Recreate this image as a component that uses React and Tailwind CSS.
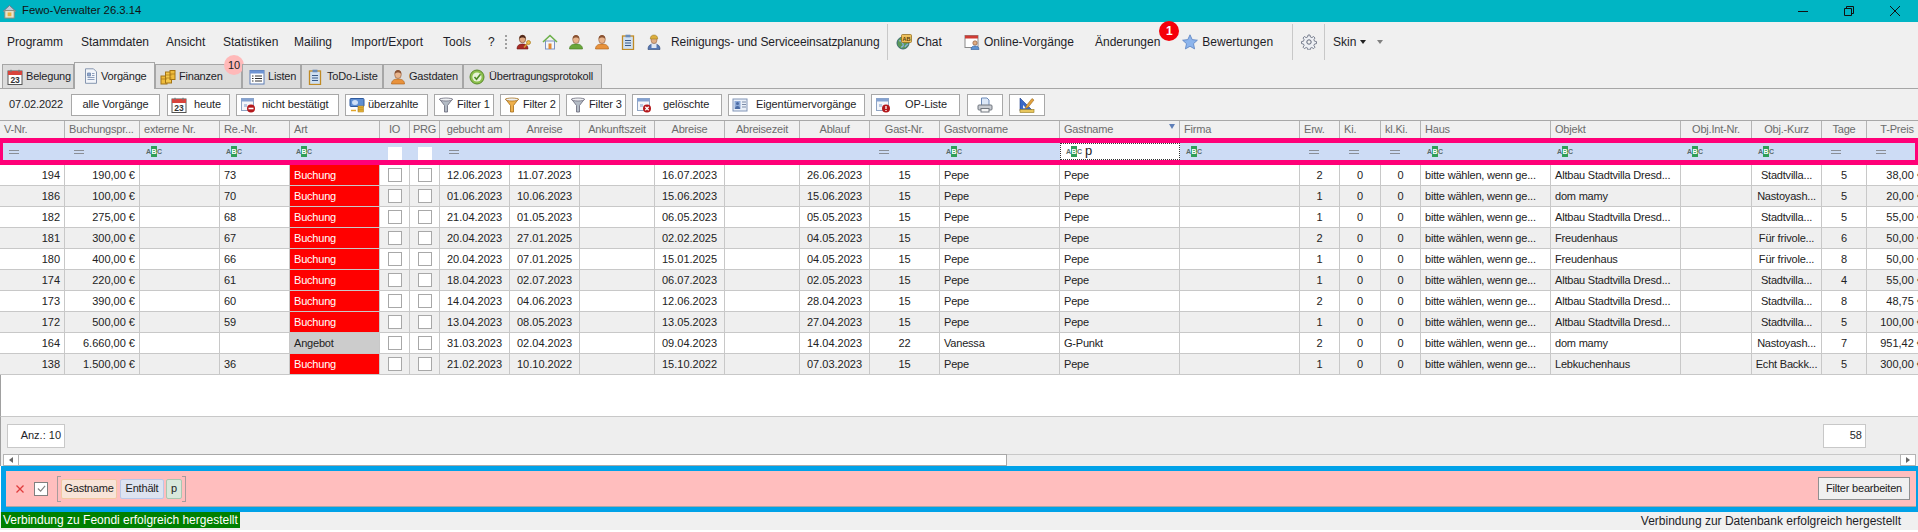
import React from 'react';

const FONT = { arial: "font-['Liberation_Sans',Arial,sans-serif]" };
const COLS = 'grid grid-cols-[65px_75px_80px_70px_90px_30px_30px_70px_70px_75px_70px_75px_70px_70px_120px_120px_120px_40px_41px_40px_130px_130px_71px_70px_45px_61px]';

// ── small colored icons, drawn roughly like the app's 16px toolbar set ──
const Svg = ({ children, className = 'w-4 h-4 shrink-0' }) => (
  <svg viewBox="0 0 16 16" className={className}>{children}</svg>
);

function Person({ shirt = '#6aa63a', dark = '#3f7a1e' }) {
  return (
    <Svg>
      <path d="M1.5 15c0-3.5 2.5-5 6.500-5s6.500 1.500 6.500 5z" fill={shirt} stroke={dark} strokeWidth=".6" />
      <ellipse cx="8" cy="5.500" rx="3.300" ry="4" fill="#e8b48c" stroke="#8c5a3c" strokeWidth=".6" />
      <path d="M4.700 5c0-3 1.500-4 3.300-4s3.300 1 3.300 4c-1-2-5.600-2-6.600 0z" fill="#8a5232" />
    </Svg>
  );
}

const KeyPerson = () => (
  <Svg>
    <path d="M1 15c0-3.500 1.800-5 5.500-5s5.500 1.500 5.500 5z" fill="#a82a24" stroke="#6e1612" strokeWidth=".6" />
    <ellipse cx="6.500" cy="5" rx="3.200" ry="3.800" fill="#e0a880" stroke="#6a3c24" strokeWidth=".6" />
    <path d="M3.300 5c0-3 1.300-4 3.200-4s3.200 1 3.200 4c-1-2-5.400-2-6.400 0z" fill="#50281a" />
    <circle cx="12.500" cy="8.500" r="2" fill="#eebc4a" stroke="#a87818" strokeWidth=".7" />
    <path d="M11 10l-3 3.500" stroke="#d49c2c" strokeWidth="1.500" />
  </Svg>
);

const House = () => (
  <Svg>
    <rect x="3.500" y="7" width="9" height="8" fill="#f4f6fb" stroke="#7d92c4" />
    <path d="M1 8l7-6.500L15 8" fill="none" stroke="#6cb04a" strokeWidth="1.600" />
    <rect x="6.500" y="9.500" width="3" height="5.500" fill="#e08a34" />
  </Svg>
);

const Clipboard = () => (
  <Svg>
    <rect x="2.500" y="2" width="11" height="13.500" fill="#cfe0f2" stroke="#c08a24" strokeWidth="1.300" />
    <rect x="5.500" y=".7" width="5" height="2.600" fill="#6a8cb8" />
    <path d="M5 6.500h6M5 9h6M5 11.500h6" stroke="#3a5a88" />
  </Svg>
);

const Worker = () => (
  <Svg>
    <path d="M2 15.500c0-4 2-5.500 6-5.500s6 1.500 6 5.500z" fill="#5678b4" stroke="#2f4674" strokeWidth=".6" />
    <rect x="5.500" y="10" width="5" height="4" fill="#dfe7f4" />
    <ellipse cx="8" cy="6" rx="3" ry="3.500" fill="#dfae84" stroke="#8c5a3c" strokeWidth=".5" />
    <path d="M4.300 5c0-3 1.700-4 3.700-4s3.700 1 3.700 4z" fill="#dcae3c" stroke="#8e6e1c" strokeWidth=".5" />
  </Svg>
);

const Calendar23 = () => (
  <Svg>
    <rect x="1" y="2" width="14" height="13.500" fill="#fff" stroke="#555" />
    <rect x="1" y="2" width="14" height="4" fill="#d8443c" />
    <path d="M4 .8v2.500M12 .8v2.500" stroke="#777" strokeWidth="1.200" />
    <text x="8" y="14.200" textAnchor="middle" fontSize="8.500" fontWeight="700" fill="#333" fontFamily="Liberation Sans">23</text>
  </Svg>
);

const Doc = () => (
  <Svg>
    <path d="M2.500 .8h8l3 3v11.500h-11z" fill="#f2f5fa" stroke="#8696b0" />
    <path d="M4.500 5h3v3h-3zM4.500 9.500h7M4.500 11.500h7M9 5.500h2.500M9 7.500h2.500" fill="#8ea6cc" stroke="#7288ac" strokeWidth=".8" />
  </Svg>
);

const Coins = () => (
  <Svg>
    <rect x="1" y="7" width="6" height="8" fill="#eebb3c" stroke="#a47414" />
    <rect x="5.500" y="3" width="6" height="11" fill="#f4c84c" stroke="#a47414" />
    <rect x="10" y="1.500" width="5" height="9" fill="#eebb3c" stroke="#a47414" />
    <path d="M5.500 6h6M5.500 9h6M1 10h6M10 5h5" stroke="#a47414" strokeWidth=".7" />
  </Svg>
);

const ListWin = () => (
  <Svg>
    <rect x="1" y="1.500" width="14" height="13.500" fill="#fff" stroke="#5c7cb4" />
    <rect x="1" y="1.500" width="14" height="3" fill="#6e94d4" />
    <path d="M3 7h1.500M6 7h7M3 9.500h1.500M6 9.500h7M3 12h1.500M6 12h7" stroke="#333" />
  </Svg>
);

const CheckCircle = () => (
  <Svg>
    <circle cx="8" cy="8" r="7" fill="#8cc04c" stroke="#5a8a2c" />
    <circle cx="8" cy="8" r="4.600" fill="#e8f2d8" />
    <path d="M5.500 8l2 2.200 4-5" fill="none" stroke="#4c8a24" strokeWidth="1.600" />
  </Svg>
);

const Funnel = ({ fill = '#b4bcc6', edge = '#667' }) => (
  <Svg>
    <path d="M1.500 2h13L9.500 8.500v6.500h-3V8.500z" fill={fill} stroke={edge} strokeWidth=".8" />
    <ellipse cx="8" cy="2.500" rx="6.500" ry="1.500" fill="#eef0f2" stroke={edge} strokeWidth=".7" />
  </Svg>
);

// calendar page with a small round red mark (nicht bestätigt, gelöschte, OP-Liste)
const CalMark = ({ mark }) => (
  <Svg>
    <rect x="1.500" y="1.500" width="12" height="12" fill="#f4f6fa" stroke="#8fa4c4" />
    <rect x="1.500" y="1.500" width="12" height="3" fill="#84a2d2" />
    <path d="M4 7h3v3H4z" fill="#b9c8e0" />
    <circle cx="11" cy="11.500" r="4" fill="#b4181c" />
    {mark === 'minus' && <path d="M8.500 11.500h5" stroke="#fff" strokeWidth="1.600" />}
    {mark === 'x' && <path d="M9.300 9.800l3.400 3.400M12.700 9.800l-3.400 3.400" stroke="#fff" strokeWidth="1.300" />}
    {mark === 'bang' && <path d="M11 9v3M11 13v1" stroke="#fff" strokeWidth="1.300" />}
  </Svg>
);

const MoneyCard = () => (
  <Svg>
    <rect x="1" y="1.500" width="14" height="8" rx="1" fill="#5e8ed2" stroke="#2f5a9e" />
    <ellipse cx="6" cy="5.500" rx="3" ry="2.500" fill="#cfe0f6" />
    <rect x="9" y="9" width="5.500" height="2" fill="#eebb3c" stroke="#a47414" strokeWidth=".5" />
    <rect x="9" y="11" width="5.500" height="2" fill="#eebb3c" stroke="#a47414" strokeWidth=".5" />
    <rect x="9" y="13" width="5.500" height="2" fill="#eebb3c" stroke="#a47414" strokeWidth=".5" />
    <path d="M2 13.500h5" stroke="#e0a428" strokeWidth="1.500" />
  </Svg>
);

const OwnerCard = () => (
  <Svg>
    <rect x="1" y="2" width="14" height="12" fill="#eaf0f8" stroke="#8296b8" />
    <rect x="2.500" y="4" width="6" height="8" fill="#8eaad8" />
    <circle cx="5.500" cy="6.500" r="1.500" fill="#4c6ca4" />
    <path d="M3 12c0-2 1-3 2.500-3s2.500 1 2.500 3z" fill="#4c6ca4" />
    <path d="M10 5h4M10 7.500h4M10 10h4" stroke="#7c8ca8" />
  </Svg>
);

const Printer = () => (
  <Svg>
    <path d="M4.500 1h5.500l2 2v6h-7.500z" fill="#dce8f8" stroke="#6c8ab8" />
    <rect x="1" y="8" width="14" height="5" rx="1" fill="#c8ccd2" stroke="#70767e" />
    <rect x="4" y="11.500" width="8" height="3.500" fill="#f6f6f6" stroke="#70767e" />
  </Svg>
);

const RulerPen = () => (
  <Svg>
    <path d="M1 1v13h13z" fill="#3a68c8" stroke="#1e3e88" strokeWidth=".6" />
    <path d="M4 8v3.200h3.200z" fill="#f0f0f0" />
    <rect x="1" y="12.500" width="14" height="3" fill="#e8c65c" stroke="#94781c" strokeWidth=".6" />
    <path d="M7 9l6-7.500 2 1.500-6 7.500-2.500 1z" fill="#e2a23c" stroke="#8c5c14" strokeWidth=".5" />
  </Svg>
);

const ChatGlobe = () => (
  <Svg>
    <circle cx="7" cy="9" r="6" fill="#5c9a58" stroke="#3a6a70" />
    <path d="M3 7c2-1 3 1 4 3s-1 3-2 3M9 13c1-2 2-2 3-3" stroke="#88aee0" strokeWidth="1.300" fill="none" />
    <rect x="5.500" y=".5" width="10" height="8" rx="1" fill="#eec05c" stroke="#8c6414" strokeWidth=".7" />
    <text x="10.500" y="6.800" textAnchor="middle" fontSize="5.500" fontWeight="700" fill="#5c3c04" fontFamily="Liberation Sans">AB</text>
  </Svg>
);

const OnlineCal = () => (
  <Svg>
    <rect x="1" y="1.500" width="13" height="12" fill="#fff" stroke="#8a8a8a" />
    <rect x="1" y="1.500" width="13" height="3" fill="#cf3c34" />
    <circle cx="11" cy="9" r="2.200" fill="#e0ae84" stroke="#7c4c2c" strokeWidth=".6" />
    <path d="M7 15.500c0-2.500 1.500-3.500 4-3.500s4 1 4 3.500z" fill="#5e92d0" stroke="#2c5a98" strokeWidth=".6" />
  </Svg>
);

const Star = () => (
  <Svg>
    <path d="M8 .8l2.200 4.800 5.200.6-3.900 3.500 1.100 5.200L8 12.300l-4.600 2.600 1.100-5.200L.6 6.200l5.200-.6z" fill="#8cb4ec" stroke="#5a82c0" strokeWidth=".8" />
  </Svg>
);

const Gear = () => (
  <Svg>
    <path d="M7 1h2l.4 2 1.500.6L12.600 2.500 14 4l-1.100 1.700.6 1.500 2 .4v2l-2 .4-.6 1.500L14 13.200 12.600 14.600l-1.700-1.100-1.500.6-.4 2H7l-.4-2-1.500-.6-1.700 1.100L2 13.200l1.100-1.700-.6-1.500-2-.4v-2l2-.4.600-1.500L2 4l1.400-1.500 1.700 1.100 1.500-.6z" fill="#eef0f4" stroke="#5e6678" strokeWidth=".8" />
    <circle cx="8" cy="8" r="2.200" fill="#f0f0f0" stroke="#5e6678" />
  </Svg>
);

const HomeTitle = () => (
  <Svg className="w-[15px] h-[15px] shrink-0">
    <path d="M1 8l7-6.500L15 8" fill="#c0c8d4" stroke="#6c7484" />
    <rect x="3" y="7" width="10" height="8" fill="#e8e4cc" stroke="#8a8a7c" />
    <rect x="6" y="9" width="4" height="4" fill="#e8b040" />
  </Svg>
);

// ── data ──
const MENU = [
  { label: 'Programm', w: 'w-[74px]' },
  { label: 'Stammdaten', w: 'w-[85px]' },
  { label: 'Ansicht', w: 'w-[57px]' },
  { label: 'Statistiken', w: 'w-[71px]' },
  { label: 'Mailing', w: 'w-[57px]' },
  { label: 'Import/Export', w: 'w-[92px]' },
  { label: 'Tools', w: 'w-[45px]' },
  { label: '?', w: 'w-[17px]' },
];

const TABS = [
  { label: 'Belegung', w: 'w-[72px] pl-[4px] gap-[3px]', icon: <Calendar23 /> },
  { label: 'Vorgänge', w: 'w-[81px] pl-[8px] gap-[2px]', icon: <Doc />, active: true },
  { label: 'Finanzen', w: 'w-[87px] pl-[4px] gap-[3px]', icon: <Coins /> },
  { label: 'Listen', w: 'w-[59px] pl-[6px] gap-[3px]', icon: <ListWin /> },
  { label: 'ToDo-Liste', w: 'w-[82px] pl-[5px] gap-[4px]', icon: <Clipboard /> },
  { label: 'Gastdaten', w: 'w-[80px] pl-[6px] gap-[3px]', icon: <Person shirt="#e8923c" dark="#a85c14" /> },
  { label: 'Übertragungsprotokoll', w: 'w-[139px] pl-[5px] gap-[4px]', icon: <CheckCircle /> },
];

const TOOLS = [
  { label: 'heute', box: 'ml-[7px] w-[63px]', text: 'ml-[7px]', icon: <Calendar23 /> },
  { label: 'nicht bestätigt', box: 'ml-[6px] w-[103px]', text: 'ml-[6px]', icon: <CalMark mark="minus" /> },
  { label: 'überzahlte', box: 'ml-[6px] w-[83px]', text: 'ml-[3px]', icon: <MoneyCard /> },
  { label: 'Filter 1', box: 'ml-[6px] w-[60px]', text: 'ml-[3px]', icon: <Funnel /> },
  { label: 'Filter 2', box: 'ml-[6px] w-[60px]', text: 'ml-[3px]', icon: <Funnel fill="#eeb04c" edge="#a46c14" /> },
  { label: 'Filter 3', box: 'ml-[6px] w-[60px]', text: 'ml-[3px]', icon: <Funnel /> },
  { label: 'gelöschte', box: 'ml-[6px] w-[90px]', text: 'ml-[11px]', icon: <CalMark mark="x" /> },
  { label: 'Eigentümervorgänge', box: 'ml-[6px] w-[137px]', text: 'ml-[8px]', icon: <OwnerCard /> },
  { label: 'OP-Liste', box: 'ml-[6px] w-[89px]', text: 'ml-[14px]', icon: <CalMark mark="bang" /> },
];

// align: l, c, r  /  filter: '=', 'abc', 'check', ''
const HEAD = [
  ['V-Nr.', 'l', '='], ['Buchungspr...', 'l', '='], ['externe Nr.', 'l', 'abc'], ['Re.-Nr.', 'l', 'abc'], ['Art', 'l', 'abc'],
  ['IO', 'c', 'check'], ['PRG', 'c', 'check'], ['gebucht am', 'c', '='], ['Anreise', 'c', ''], ['Ankunftszeit', 'c', ''],
  ['Abreise', 'c', ''], ['Abreisezeit', 'c', ''], ['Ablauf', 'c', ''], ['Gast-Nr.', 'c', '='], ['Gastvorname', 'l', 'abc'],
  ['Gastname', 'l', 'abc'], ['Firma', 'l', 'abc'], ['Erw.', 'l', '='], ['Ki.', 'l', '='], ['kl.Ki.', 'l', '='],
  ['Haus', 'l', 'abc'], ['Objekt', 'l', 'abc'], ['Obj.Int-Nr.', 'c', 'abc'], ['Obj.-Kurz', 'c', 'abc'], ['Tage', 'c', '='], ['T-Preis', 'c', '='],
];

const ROW_ALIGN = ['r', 'r', 'l', 'l', 'l', 'c', 'c', 'c', 'c', 'c', 'c', 'c', 'c', 'c', 'l', 'l', 'l', 'c', 'c', 'c', 'l', 'l', 'c', 'c', 'c', 'r'];

const HAUS = 'bitte wählen, wenn ge...';
const ALT = 'Altbau Stadtvilla Dresd...';
const ROWS = [
  ['194', '190,00 €', '73', 'Buchung', '12.06.2023', '11.07.2023', '16.07.2023', '26.06.2023', '15', 'Pepe', 'Pepe', '2', ALT, 'Stadtvilla...', '5', '38,00 €'],
  ['186', '100,00 €', '70', 'Buchung', '01.06.2023', '10.06.2023', '15.06.2023', '15.06.2023', '15', 'Pepe', 'Pepe', '1', 'dom mamy', 'Nastoyash...', '5', '20,00 €'],
  ['182', '275,00 €', '68', 'Buchung', '21.04.2023', '01.05.2023', '06.05.2023', '05.05.2023', '15', 'Pepe', 'Pepe', '1', ALT, 'Stadtvilla...', '5', '55,00 €'],
  ['181', '300,00 €', '67', 'Buchung', '20.04.2023', '27.01.2025', '02.02.2025', '04.05.2023', '15', 'Pepe', 'Pepe', '2', 'Freudenhaus', 'Für frivole...', '6', '50,00 €'],
  ['180', '400,00 €', '66', 'Buchung', '20.04.2023', '07.01.2025', '15.01.2025', '04.05.2023', '15', 'Pepe', 'Pepe', '1', 'Freudenhaus', 'Für frivole...', '8', '50,00 €'],
  ['174', '220,00 €', '61', 'Buchung', '18.04.2023', '02.07.2023', '06.07.2023', '02.05.2023', '15', 'Pepe', 'Pepe', '1', ALT, 'Stadtvilla...', '4', '55,00 €'],
  ['173', '390,00 €', '60', 'Buchung', '14.04.2023', '04.06.2023', '12.06.2023', '28.04.2023', '15', 'Pepe', 'Pepe', '2', ALT, 'Stadtvilla...', '8', '48,75 €'],
  ['172', '500,00 €', '59', 'Buchung', '13.04.2023', '08.05.2023', '13.05.2023', '27.04.2023', '15', 'Pepe', 'Pepe', '1', ALT, 'Stadtvilla...', '5', '100,00 €'],
  ['164', '6.660,00 €', '', 'Angebot', '31.03.2023', '02.04.2023', '09.04.2023', '14.04.2023', '22', 'Vanessa', 'G-Punkt', '2', 'dom mamy', 'Nastoyash...', '7', '951,42 €'],
  ['138', '1.500,00 €', '36', 'Buchung', '21.02.2023', '10.10.2022', '15.10.2022', '07.03.2023', '15', 'Pepe', 'Pepe', '1', 'Lebkuchenhaus', 'Echt Backk...', '5', '300,00 €'],
];

// expand a short data row into all 26 grid cells
const toCells = (r) => [
  r[0], r[1], '', r[2], r[3], null, null, r[4], r[5], '', r[6], '', r[7], r[8], r[9], r[10], '',
  r[11], '0', '0', HAUS, r[12], '', r[13], r[14], r[15],
];

const alignCls = { l: 'justify-start', c: 'justify-center', r: 'justify-end' };

const Abc = () => (
  <span className="flex items-center justify-between w-[16px] h-[10px] text-[7px] leading-none font-bold text-[#5a6a6a]">
    <span>A</span>
    <span className="bg-[#2f9e58] text-white h-[11px] w-[7px] flex items-center justify-center">B</span>
    <span>C</span>
  </span>
);

const Eq = () => <span className="block w-[10px] h-[4px] border-y border-[#8a8e96]" />;

function FilterCell({ kind, isName }) {
  if (kind === 'check') {
    return (
      <div className="flex items-end justify-center">
        <span className="w-[14px] h-[13px] bg-white" />
      </div>
    );
  }
  if (isName) {
    return (
      <div className="flex items-center gap-[3px] pl-[5px] bg-white border border-dotted border-[#333] text-[13px] text-[#222]">
        <Abc /><span className="-mt-[2px]">p</span>
      </div>
    );
  }
  return (
    <div className={`flex items-center ${kind === '=' ? 'pl-[9px]' : 'pl-[6px]'}`}>
      {kind === '=' && <Eq />}
      {kind === 'abc' && <Abc />}
    </div>
  );
}

function Row({ data, idx }) {
  const cells = toCells(data);
  return (
    <div className={`${COLS} h-[21px] border-b border-[#c8c8c8] text-[#222] ${idx % 2 ? 'bg-[#efefef]' : 'bg-white'}`}>
      {cells.map((c, i) => {
        const isArt = i === 4;
        const artBg = c === 'Angebot' ? 'bg-[#cccccc] text-[#222]' : 'bg-[#ff0000] text-white';
        const wordy = c && /[A-Za-zäöü]/.test(c);
        return (
          <div key={i} className={`flex items-center overflow-hidden whitespace-nowrap px-[4px] border-r border-[#c8c8c8] ${alignCls[ROW_ALIGN[i]]} ${isArt ? artBg : ''} ${wordy ? 'tracking-[-0.2px]' : ''}`}>
            {c === null ? <span className="w-[14px] h-[14px] bg-white border border-[#a8a8a8] shrink-0" /> : c}
          </div>
        );
      })}
    </div>
  );
}

function ToolBtn({ t }) {
  return (
    <div className={`flex items-center h-[22px] bg-white border border-[#a8a8a8] pl-[3px] whitespace-nowrap ${t.box}`}>
      {t.icon}
      <span className={t.text}>{t.label}</span>
    </div>
  );
}

const Bracket = ({ side }) => (
  <span className={`block w-[4px] h-[26px] border-y border-[#a89c9c] ${side === 'l' ? 'border-l' : 'border-r'}`} />
);

export default function App() {
  return (
    <div className={`w-[1918px] h-[532px] overflow-hidden bg-white text-[11px] leading-none text-[#1e1e28] ${FONT.arial}`}>
      {/* title bar */}
      <div className="flex items-center h-[22px] bg-[#00b5c4] pl-[2px] gap-[5px] text-[#111] text-[11.3px]">
        <HomeTitle />
        <span className="flex-1">Fewo-Verwalter 26.3.14</span>
        <div className="flex items-center">
          <span className="w-[46px] flex justify-center"><span className="block w-[10px] h-px bg-[#111]" /></span>
          <span className="w-[46px] flex justify-center">
            <svg viewBox="0 0 10 10" className="w-[10px] h-[10px]" fill="none" stroke="#111"><path d="M.5 2.500h7v7h-7zM2.500 2.500v-2h7v7h-2" /></svg>
          </span>
          <span className="w-[46px] flex justify-center">
            <svg viewBox="0 0 10 10" className="w-[10px] h-[10px]" stroke="#111"><path d="M0 0l10 10M10 0L0 10" /></svg>
          </span>
        </div>
      </div>

      {/* menu bar */}
      <div className="flex items-center h-[40px] bg-[#f0f0f0] pl-[7px] whitespace-nowrap text-[12px]">
        {MENU.map((m) => <span key={m.label} className={m.w}>{m.label}</span>)}
        <span className="w-[8px] h-[14px] border-l-2 border-dotted border-[#a0a0a0]" />
        <div className="flex items-center gap-[10px] ml-[3px]">
          <KeyPerson />
          <House />
          <Person />
          <Person shirt="#e8923c" dark="#a85c14" />
          <Clipboard />
          <Worker />
        </div>
        <span className="ml-[9px] tracking-[-0.08px]">Reinigungs- und Serviceeinsatzplanung</span>
        <span className="w-px h-[36px] bg-[#c8c8c8] ml-[7px] mr-[8px]" />
        <ChatGlobe />
        <span className="ml-[5px]">Chat</span>
        <span className="ml-[22px]"><OnlineCal /></span>
        <span className="ml-[4px]">Online-Vorgänge</span>
        <span className="relative ml-[21px]">
          Änderungen
          <span className="absolute -right-[19px] -top-[15px] w-[20px] h-[20px] rounded-full bg-[#f5000a] text-white font-bold flex items-center justify-center">1</span>
        </span>
        <span className="ml-[22px]"><Star /></span>
        <span className="ml-[4px]">Bewertungen</span>
        <span className="w-px h-[36px] bg-[#c8c8c8] ml-[19px] mr-[8px]" />
        <Gear />
        <span className="w-px h-[36px] bg-[#c8c8c8] ml-[7px] mr-[8px]" />
        <span>Skin</span>
        <span className="ml-[4px] border-x-[3px] border-t-[4px] border-x-transparent border-t-[#222]" />
        <span className="ml-[11px] border-x-[3px] border-t-[4px] border-x-transparent border-t-[#808080]" />
      </div>

      {/* tabs */}
      <div className="flex items-end h-[27px] bg-[#f0f0f0] pl-[2px] border-b border-[#a6a6a6] whitespace-nowrap tracking-[-0.2px]">
        {TABS.map((t) => (
          <div key={t.label} className={`relative flex items-center border border-b-0 border-[#a6a6a6] ${t.w} ${t.active ? 'h-[27px] bg-[#f0f0f0] -mb-px' : 'h-[24px] bg-[#dcdcdc]'}`}>
            {t.icon}
            <span>{t.label}</span>
            {t.label === 'Finanzen' && (
              <span className="absolute -right-[3px] -top-[10px] w-[20px] h-[20px] rounded-full bg-[#ffb9b9] text-[#222] flex items-center justify-center">10</span>
            )}
          </div>
        ))}
      </div>

      {/* toolbar */}
      <div className="flex items-center h-[31px] bg-[#f0f0f0] pl-[9px] whitespace-nowrap tracking-[-0.1px]">
        <span className="w-[62px]">07.02.2022</span>
        <div className="flex items-center justify-center h-[22px] w-[89px] bg-white border border-[#a8a8a8]">alle Vorgänge</div>
        {TOOLS.map((t) => <ToolBtn key={t.label} t={t} />)}
        <div className="flex items-center justify-center h-[22px] w-[36px] ml-[7px] bg-white border border-[#a8a8a8]"><Printer /></div>
        <div className="flex items-center justify-center h-[22px] w-[36px] ml-[6px] bg-white border border-[#a8a8a8]"><RulerPen /></div>
      </div>

      {/* grid header */}
      <div className={`${COLS} h-[18px] bg-[#f0f0f0] border-t border-[#a8a8a8] text-[#6c6c6c] tracking-[-0.2px]`}>
        {HEAD.map(([label, align]) => (
          <div key={label} className={`relative flex items-center whitespace-nowrap overflow-hidden px-[4px] border-r border-[#b4b4b4] ${alignCls[align]}`}>
            {label}
            {label === 'Gastname' && (
              <span className="absolute right-[4px] top-[3px] border-x-[3px] border-t-[5px] border-x-transparent border-t-[#5f7fb8]" />
            )}
          </div>
        ))}
      </div>

      {/* filter row, pink frame */}
      <div className="h-[27px] border-y-[5px] border-x-[3px] border-[#ff0078] overflow-hidden">
        <div className={`${COLS} h-[17px] -ml-[3px] bg-[#cddcf5]`}>
          {HEAD.map(([label, , kind]) => (
            <FilterCell key={label} kind={kind} isName={label === 'Gastname'} />
          ))}
        </div>
      </div>

      {/* rows */}
      {ROWS.map((r, i) => <Row key={r[0]} data={r} idx={i} />)}

      <div className="h-[41px] bg-white border-b border-[#c8c8c8] border-l border-l-[#a0a0a0] box-content" />

      {/* footer counters */}
      <div className="flex items-center justify-between h-[37px] bg-[#eeeeee] border-l border-[#a0a0a0] pl-[6px] pr-[52px]">
        <div className="flex items-center justify-end w-[58px] h-[24px] bg-white border border-[#c8c8c8] pr-[3px]">Anz.: 10</div>
        <div className="flex items-center justify-end w-[43px] h-[24px] bg-white border border-[#c8c8c8] pr-[3px]">58</div>
      </div>

      {/* horizontal scrollbar */}
      <div className="flex h-[12px] bg-[#eeeeee] border-l border-[#a0a0a0] pl-[2px] pr-[2px]">
        <div className="flex items-center justify-center w-[16px] bg-white border border-[#b4b4b4]">
          <span className="border-y-[3px] border-r-[4px] border-y-transparent border-r-[#666]" />
        </div>
        <div className="w-[988px] bg-white border-y border-r border-[#a8a8a8]" />
        <div className="flex-1 border-t border-[#c8c8c8]" />
        <div className="flex items-center justify-center w-[16px] bg-white border border-[#b4b4b4]">
          <span className="border-y-[3px] border-l-[4px] border-y-transparent border-l-[#666]" />
        </div>
      </div>

      {/* active filter bar, blue frame */}
      <div className="flex items-center h-[46px] ml-px border-y-[5px] border-l-[5px] border-r-2 border-[#00a2e8] bg-[#ffbebe] text-[#222] tracking-[-0.2px]">
        <div className="flex items-center flex-1 h-full border-b border-[#a8a8a8] pr-[6px]">
          <svg viewBox="0 0 8 8" className="w-[8px] h-[8px] ml-[10px]" stroke="#e03c3c" strokeWidth="1.300"><path d="M.5.5l7 7M7.500.5l-7 7" /></svg>
          <span className="flex items-center justify-center w-[14px] h-[14px] ml-[10px] bg-white border border-[#808080]">
            <svg viewBox="0 0 10 10" className="w-[9px] h-[9px]" fill="none" stroke="#808080" strokeWidth="1.200"><path d="M1 5l3 3 5-6" /></svg>
          </span>
          <span className="ml-[9px]"><Bracket side="l" /></span>
          <span className="flex items-center justify-center w-[56px] h-[20px] bg-[#f8e4d8] border border-[#f2c8a2] rounded-[2px]">Gastname</span>
          <span className="flex items-center justify-center w-[44px] h-[20px] ml-[3px] bg-[#dde3f0] border border-[#b8c8e8] rounded-[2px]">Enthält</span>
          <span className="flex items-center justify-center w-[16px] h-[20px] ml-[2px] bg-[#d8e8dc] border border-[#a8c8b0] rounded-[2px]">p</span>
          <Bracket side="r" />
          <div className="flex-1" />
          <div className="flex items-center justify-center w-[92px] h-[23px] bg-[#f0f0f0] border border-[#909090]">Filter bearbeiten</div>
        </div>
      </div>

      {/* status bar */}
      <div className="flex items-center justify-between h-[18px] bg-[#f0f0f0] pr-[17px] text-[12px]">
        <span className="flex items-center h-[16px] self-start w-[239px] ml-px pl-[2px] bg-[#008000] text-white whitespace-nowrap">Verbindung zu Feondi erfolgreich hergestellt</span>
        <span className="whitespace-nowrap">Verbindung zur Datenbank erfolgreich hergestellt</span>
      </div>
    </div>
  );
}
